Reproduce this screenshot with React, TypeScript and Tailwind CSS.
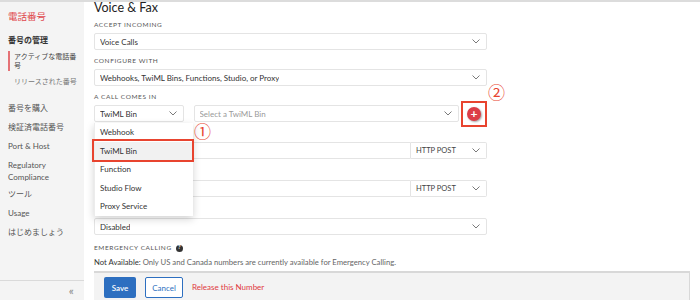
import React from 'react';

const FONT = "font-['Lato','Noto_Sans_CJK_JP',sans-serif]";

const Chevron = () => (
  <svg width="8" height="5" viewBox="0 0 8 5" className="shrink-0">
    <polyline points="0.5,0.5 4,4 7.5,0.5" fill="none" stroke="#6b6b6b" strokeWidth="0.9" />
  </svg>
);

const Label: React.FC<{ children?: React.ReactNode; mt?: string }> = ({ children, mt = 'mt-[6px]' }) => (
  <div className={`${mt} h-[10px] leading-[10px] text-[6.5px] tracking-[0.09em] text-[#555] uppercase`}>{children}</div>
);

const Select: React.FC<{ value: string; className?: string; muted?: boolean }> = ({ value, className = '', muted }) => (
  <div
    className={`h-[17px] flex items-center justify-between pl-[5px] pr-[6px] border border-[#e4e4e4] rounded-[2px] bg-white text-[8px] ${
      muted ? 'text-[#9a9a9a]' : 'text-[#333]'
    } ${className}`}
  >
    <span className="truncate">{value}</span>
    <Chevron />
  </div>
);

const UrlRow = () => (
  <div className="mt-[3px] flex h-[17px]">
    <div className="flex-1 border border-[#e4e4e4] rounded-l-[2px] bg-white" />
    <div className="w-[76px] h-full flex items-center justify-between pl-[5px] pr-[6px] border border-l-0 border-[#e4e4e4] rounded-r-[2px] text-[7.5px] text-[#444]">
      <span>HTTP POST</span>
      <Chevron />
    </div>
  </div>
);

const sideItem = 'h-[19px] leading-[19px] text-[8px] text-[#555]';

export default function App() {
  return (
    <div className={`relative flex w-[700px] h-[300px] overflow-hidden bg-white border-t-2 border-[#dcdcdc] ${FONT}`}>
      {/* Sidebar */}
      <aside className="w-[84px] shrink-0 bg-[#f4f4f4] flex flex-col">
        <div className="pl-[8px] pt-[8px]">
          <div className="h-[14px] leading-[14px] text-[9.5px] text-[#e04a4f]">電話番号</div>
          <div className="mt-[10px] h-[12px] leading-[12px] text-[8px] text-[#333] font-semibold">番号の管理</div>
          <div className="mt-[5px] border-l-2 border-[#e57276] pl-[4px] text-[7px] leading-[9px] text-[#444] py-[1px] w-[72px]">
            アクティブな電話番号
          </div>
          <div className="mt-[4px] pl-[6px] h-[12px] leading-[12px] text-[7px] text-[#777]">リリースされた番号</div>
          <div className="mt-[12px]">
            <div className={sideItem}>番号を購入</div>
            <div className={sideItem}>検証済電話番号</div>
            <div className={sideItem}>Port &amp; Host</div>
            <div className="pt-[3px] pb-[2px] text-[8px] leading-[12px] text-[#555]">
              Regulatory
              <br />
              Compliance
            </div>
            <div className={sideItem}>ツール</div>
            <div className={sideItem}>Usage</div>
            <div className={sideItem}>はじめましょう</div>
          </div>
        </div>
        <div className="mt-auto h-[20px] border-t border-[#dadada] flex items-center justify-end pr-[10px] text-[12px] text-[#888]">
          «
        </div>
      </aside>

      {/* Main */}
      <main className="flex-1 flex flex-col pl-[10px]">
        <div className="w-[393px]">
          <h1 className="mt-0 h-[10px] leading-[12px] text-[12.5px] text-[#222]">Voice &amp; Fax</h1>

          <Label mt="mt-[8px]">Accept Incoming</Label>
          <Select value="Voice Calls" className="mt-[3px]" />

          <Label>Configure With</Label>
          <Select value="Webhooks, TwiML Bins, Functions, Studio, or Proxy" className="mt-[3px]" />

          <Label>A Call Comes In</Label>
          <div className="mt-[3px] flex items-center h-[17px]">
            <Select value="TwiML Bin" className="w-[90px] border-[#c9c9c9]" />
            <Select value="Select a TwiML Bin" muted className="ml-[10px] w-[267px]" />
            <div className="ml-[2px] w-[26px] h-[26px] shrink-0 border-2 border-[#e8442f] flex items-center justify-center">
              <div className="w-[14px] h-[14px] rounded-full bg-[#dc3d47] shadow-[1px_1px_2px_rgba(0,0,0,0.35)] flex items-center justify-center text-white text-[12px] leading-none font-bold">
                +
              </div>
            </div>
          </div>

          {/* labels of these rows sit under the open menu */}
          <Label mt="mt-[7px]" />
          <UrlRow />

          <Label mt="mt-[8px]" />
          <UrlRow />

          <Label mt="mt-[8px]" />
          <Select value="Disabled" className="mt-[3px]" />

          <div className="mt-[8px] h-[10px] flex items-center gap-[4px] text-[6.5px] tracking-[0.09em] text-[#555]">
            EMERGENCY CALLING
            <span className="w-[7px] h-[7px] rounded-full bg-[#333] text-white text-[5.5px] leading-none font-bold flex items-center justify-center tracking-normal">
              ?
            </span>
          </div>
          <div className="mt-[4px] h-[10px] leading-[10px] text-[7.7px] text-[#666] whitespace-nowrap">
            <span className="text-[#333]">Not Available:</span> Only US and Canada numbers are currently available for
            Emergency Calling.
          </div>
        </div>

        <div className="mt-[4px] w-[596px] h-[29px] bg-[#f3f3f3] border-t-2 border-r border-[#d8d8d8] flex items-start pt-[4px] pl-[10px] gap-[9px]">
          <button className="w-[32px] h-[21px] rounded-[2px] bg-[#2d6fc0] text-white text-[8px] font-semibold">Save</button>
          <button className="w-[38px] h-[21px] rounded-[2px] bg-white border border-[#2d6fc0] text-[#2d6fc0] text-[8px]">
            Cancel
          </button>
          <span className="h-[21px] leading-[21px] text-[8px] text-[#e0393e]">Release this Number</span>
        </div>
      </main>

      {/* Open dropdown menu */}
      <div className="absolute left-[94px] top-[121px] w-[99px] bg-white shadow-[0_3px_8px_rgba(0,0,0,0.18)] border-l border-[#ececec] text-[8px] text-[#333]">
        {['Webhook', 'TwiML Bin', 'Function', 'Studio Flow', 'Proxy Service'].map((item) => (
          <div
            key={item}
            className={`h-[18.5px] leading-[18.5px] pl-[5px] ${item === 'TwiML Bin' ? 'bg-[#f1f1f1]' : ''}`}
          >
            {item}
          </div>
        ))}
      </div>

      {/* Annotations */}
      <div className="absolute left-[92px] top-[137px] w-[102px] h-[23px] border-2 border-[#e8442f]" />
      <span className="absolute left-[194px] top-[120px] text-[17px] leading-none text-[#e8442f] font-['Noto_Sans_CJK_JP',sans-serif]">
        ①
      </span>
      <span className="absolute left-[488px] top-[81px] text-[17px] leading-none text-[#e8442f] font-['Noto_Sans_CJK_JP',sans-serif]">
        ②
      </span>
    </div>
  );
}
